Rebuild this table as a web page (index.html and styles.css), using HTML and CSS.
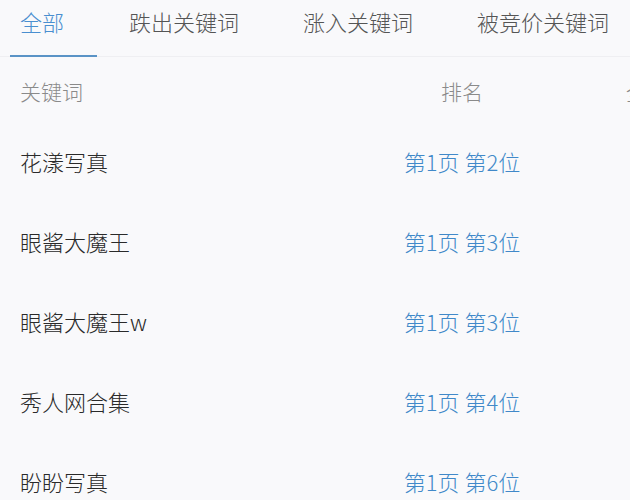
FILE: index.html
```html
<!DOCTYPE html>
<html lang="zh-CN">
<head>
<meta charset="utf-8">
<link rel="stylesheet" href="styles.css">
</head>
<body>
<div class="page">
  <nav class="tabs">
    <div class="tab active">全部</div>
    <div class="tab">跌出关键词</div>
    <div class="tab">涨入关键词</div>
    <div class="tab">被竞价关键词</div>
  </nav>
  <div class="table">
    <div class="row head">
      <div class="c-kw">关键词</div>
      <div class="c-rank">排名</div>
      <div class="c-more">全网指数</div>
    </div>
    <div class="row">
      <div class="c-kw">花漾写真</div>
      <div class="c-rank rank">第1页 第2位</div>
      <div class="c-more"></div>
    </div>
    <div class="row">
      <div class="c-kw">眼酱大魔王</div>
      <div class="c-rank rank">第1页 第3位</div>
      <div class="c-more"></div>
    </div>
    <div class="row">
      <div class="c-kw">眼酱大魔王w</div>
      <div class="c-rank rank">第1页 第3位</div>
      <div class="c-more"></div>
    </div>
    <div class="row">
      <div class="c-kw">秀人网合集</div>
      <div class="c-rank rank">第1页 第4位</div>
      <div class="c-more"></div>
    </div>
    <div class="row">
      <div class="c-kw">盼盼写真</div>
      <div class="c-rank rank">第1页 第6位</div>
      <div class="c-more"></div>
    </div>
  </div>
</div>
</body>
</html>
```
FILE: styles.css
```css
html, body {
  margin: 0;
  padding: 0;
  background: #f9f9fb;
  overflow: hidden;
}
.page {
  width: 630px;
  height: 500px;
  overflow: hidden;
  font-family: "Noto Sans CJK SC", "Noto Sans", sans-serif;
  font-weight: 300;
  color: #2a2a2a;
}
.tabs {
  display: flex;
  height: 57px;
  padding-left: 10px;
  border-bottom: 1px solid #efeff2;
  box-sizing: border-box;
  white-space: nowrap;
}
.tab {
  font-size: 22px;
  line-height: 42px;
  padding: 0 32px;
  color: #555;
  box-sizing: border-box;
  height: 57px;
}
.tab.active {
  padding-left: 10px;
  padding-right: 33px;
  color: #4a8fd0;
  border-bottom: 2px solid #5a93c6;
}
.table {
  display: flex;
  flex-direction: column;
}
.row {
  display: grid;
  grid-template-columns: 382px 160px 200px;
  height: 80px;
  box-sizing: border-box;
  align-items: center;
  font-size: 22px;
  white-space: nowrap;
  flex-shrink: 0;
}
.row.head {
  height: 66px;
  color: #8a8a8a;
  font-size: 21px;
  padding-top: 1px;
}
.row:not(.head) {
  padding-bottom: 4px;
}
.c-kw {
  padding-left: 20px;
}
.c-rank {
  text-align: center;
}
.c-more {
  padding-left: 84px;
}
.rank {
  color: #4189c9;
}
```
